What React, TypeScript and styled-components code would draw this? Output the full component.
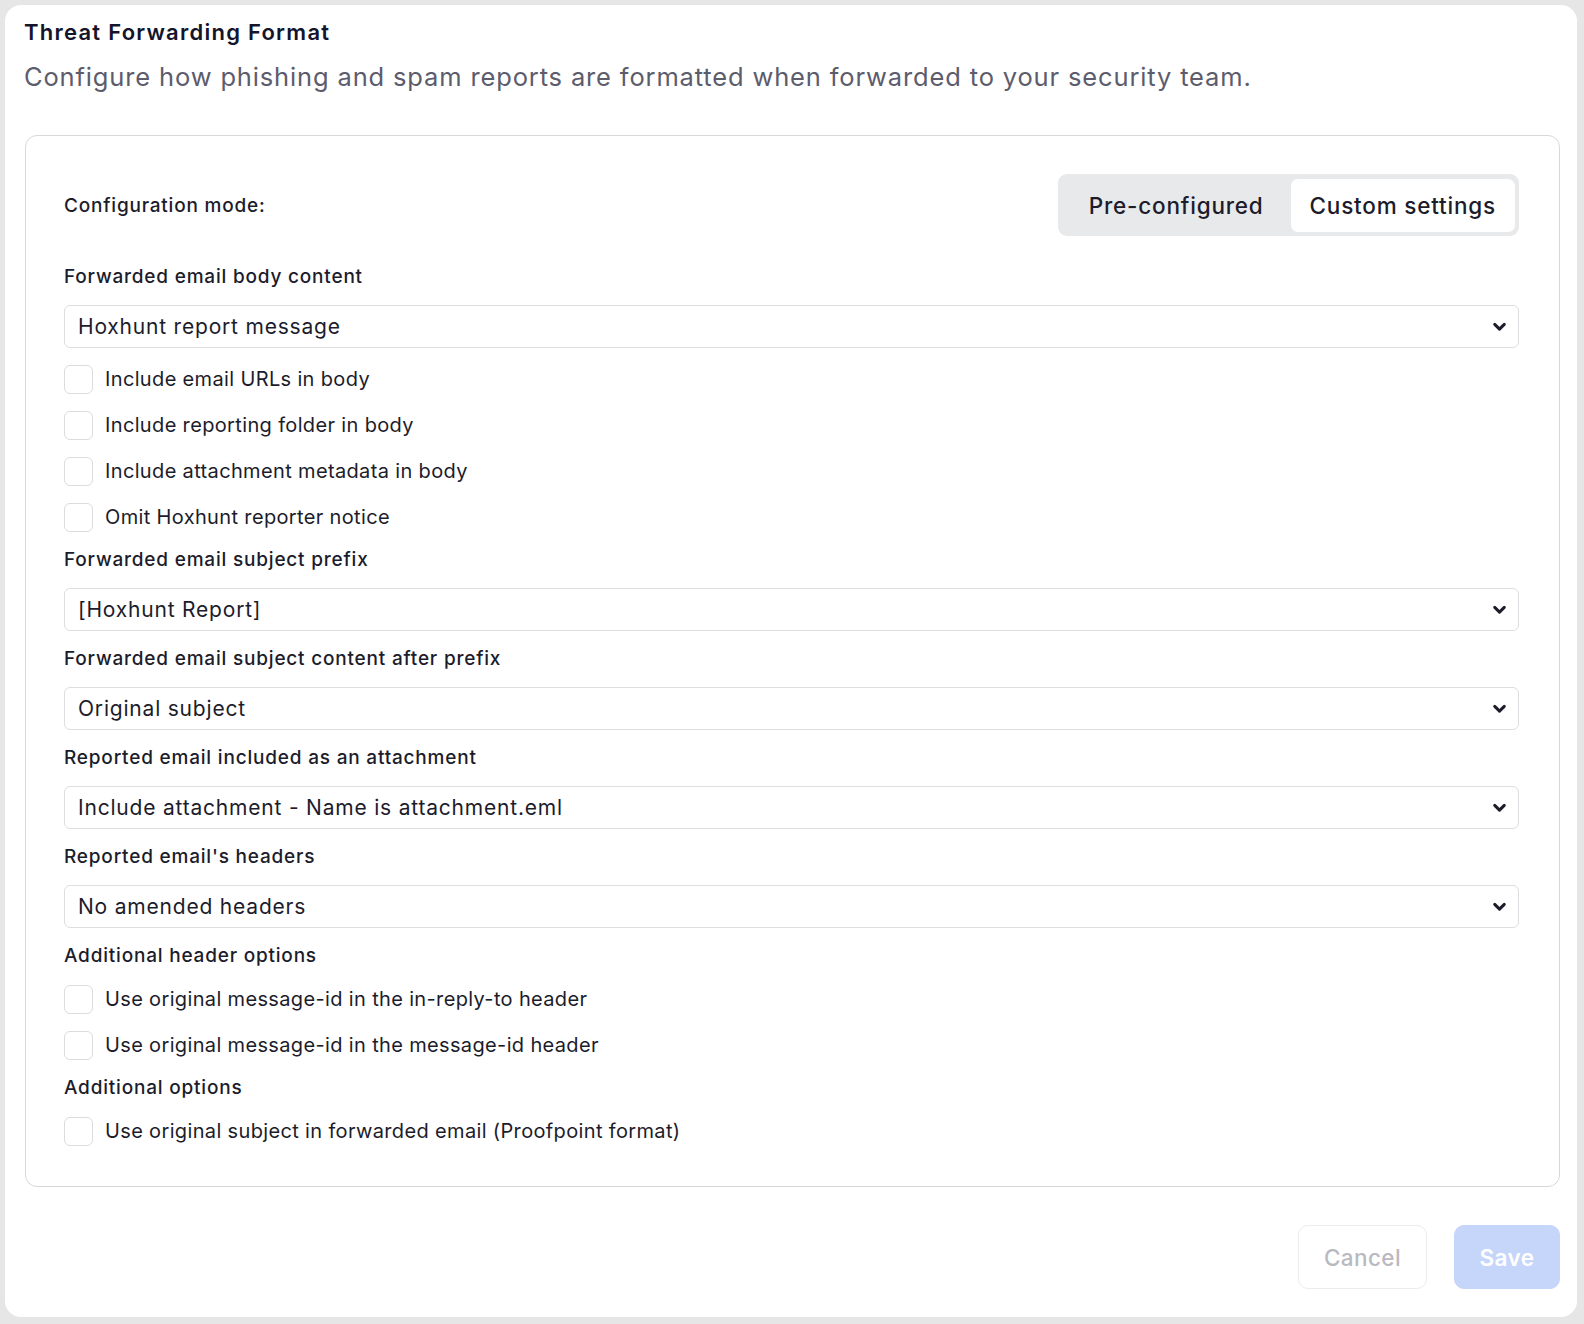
import React from "react";
import styled, { createGlobalStyle } from "styled-components";

const Global = createGlobalStyle`
  html, body { margin: 0; padding: 0; background: #e6e6e6; }
  body { font-family: "Inter", "Open Sans", sans-serif; color: #1c1c2b; }
  * { box-sizing: border-box; }
`;

const Page = styled.div`
  padding: 5px 7px 7px 5px;
  min-height: 1324px;
`;

const Sheet = styled.div`
  background: #fff;
  border-radius: 16px;
  height: 1312px;
  padding: 14px 17px 28px 20px;
  display: flex;
  flex-direction: column;
`;

const Title = styled.h1`
  margin: 0 0 0 -1px;
  font-size: 22px;
  line-height: 26px;
  font-weight: 600;
  letter-spacing: 1.25px;
  color: #14142a;
`;

const Subtitle = styled.p`
  margin: 16px 0 0 -1px;
  font-size: 25.5px;
  line-height: 32px;
  font-weight: 400;
  letter-spacing: 0.85px;
  color: #5c5c6c;
`;

const Panel = styled.section`
  margin-top: 42px;
  border: 1px solid #d8d8dc;
  border-radius: 12px;
  padding: 38px 40px 40px 38px;
  display: flex;
  flex-direction: column;
  gap: 16px;
`;

const ModeRow = styled.div`
  display: flex;
  align-items: center;
  justify-content: space-between;
  margin-bottom: 13px;
`;

const ModeLabel = styled.span`
  font-size: 19px;
  font-weight: 500;
  letter-spacing: 0.8px;
  color: #1c1c2b;
`;

const Segmented = styled.div`
  display: flex;
  background: #e8e9eb;
  border-radius: 9px;
  padding: 5px 4px 4px 4px;
  height: 62px;
`;

const Segment = styled.button<{ $active?: boolean }>`
  border: none;
  font-family: inherit;
  font-size: 22.5px;
  font-weight: 500;
  letter-spacing: 0.8px;
  color: #1c1c2b;
  background: ${(p) => (p.$active ? "#fff" : "transparent")};
  border-radius: 7px;
  padding: 0 ${(p) => (p.$active ? "19px" : "27px")};
  cursor: pointer;
`;

const FieldLabel = styled.div`
  font-size: 19px;
  line-height: 24px;
  font-weight: 500;
  letter-spacing: 0.8px;
  color: #1c1c2b;
`;

const SelectBox = styled.div`
  height: 43px;
  border: 1px solid #dedee2;
  border-radius: 6px;
  display: flex;
  align-items: center;
  justify-content: space-between;
  padding: 0 10px 0 13px;
  font-size: 21px;
  letter-spacing: 0.8px;
  color: #1c1c2b;
`;

const CheckRow = styled.label`
  display: flex;
  align-items: center;
  gap: 12px;
  height: 30px;
  font-size: 20px;
  letter-spacing: 0.35px;
  color: #1c1c2b;
`;

const Box = styled.span`
  width: 29px;
  height: 29px;
  border: 1px solid #dcdce0;
  border-radius: 6px;
  background: #fff;
  flex-shrink: 0;
`;

const Footer = styled.div`
  margin-top: auto;
  display: flex;
  justify-content: flex-end;
  gap: 27px;
`;

const Button = styled.button<{ $primary?: boolean }>`
  height: 64px;
  border-radius: 10px;
  font-family: inherit;
  font-size: 22.5px;
  letter-spacing: 0.4px;
  font-weight: ${(p) => (p.$primary ? 600 : 500)};
  padding: 0 24px;
  min-width: ${(p) => (p.$primary ? "106px" : "129px")};
  border: 1px solid ${(p) => (p.$primary ? "#c5d6fa" : "#ececef")};
  background: ${(p) => (p.$primary ? "#c5d6fa" : "#fff")};
  color: ${(p) => (p.$primary ? "#fff" : "#b9b9c0")};
`;

const Chevron = () => (
  <svg width="17" height="17" viewBox="0 0 16 16" fill="none">
    <path d="M3.5 6l4.5 4.5L12.5 6" stroke="#1c1c2b" strokeWidth="2.8" strokeLinecap="round" strokeLinejoin="round" />
  </svg>
);

const Select = ({ value }: { value: string }) => (
  <SelectBox>
    <span>{value}</span>
    <Chevron />
  </SelectBox>
);

const Check = ({ label }: { label: string }) => (
  <CheckRow>
    <Box />
    <span>{label}</span>
  </CheckRow>
);

export default function App() {
  return (
    <>
      <Global />
      <Page>
        <Sheet>
          <Title>Threat Forwarding Format</Title>
          <Subtitle>Configure how phishing and spam reports are formatted when forwarded to your security team.</Subtitle>
          <Panel>
            <ModeRow>
              <ModeLabel>Configuration mode:</ModeLabel>
              <Segmented>
                <Segment>Pre-configured</Segment>
                <Segment $active>Custom settings</Segment>
              </Segmented>
            </ModeRow>
            <FieldLabel>Forwarded email body content</FieldLabel>
            <Select value="Hoxhunt report message" />
            <Check label="Include email URLs in body" />
            <Check label="Include reporting folder in body" />
            <Check label="Include attachment metadata in body" />
            <Check label="Omit Hoxhunt reporter notice" />
            <FieldLabel>Forwarded email subject prefix</FieldLabel>
            <Select value="[Hoxhunt Report]" />
            <FieldLabel>Forwarded email subject content after prefix</FieldLabel>
            <Select value="Original subject" />
            <FieldLabel>Reported email included as an attachment</FieldLabel>
            <Select value="Include attachment - Name is attachment.eml" />
            <FieldLabel>Reported email's headers</FieldLabel>
            <Select value="No amended headers" />
            <FieldLabel>Additional header options</FieldLabel>
            <Check label="Use original message-id in the in-reply-to header" />
            <Check label="Use original message-id in the message-id header" />
            <FieldLabel>Additional options</FieldLabel>
            <Check label="Use original subject in forwarded email (Proofpoint format)" />
          </Panel>
          <Footer>
            <Button>Cancel</Button>
            <Button $primary>Save</Button>
          </Footer>
        </Sheet>
      </Page>
    </>
  );
}
